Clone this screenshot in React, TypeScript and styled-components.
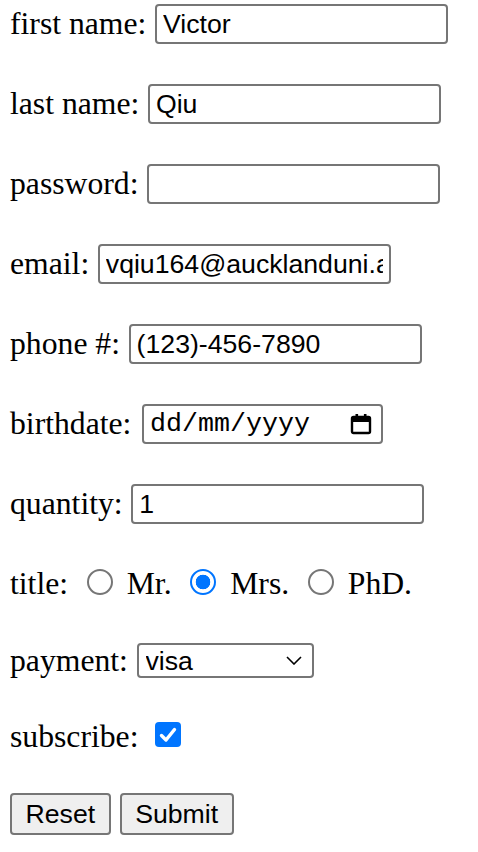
import React from "react";
import styled, { createGlobalStyle } from "styled-components";

const Global = createGlobalStyle`
  html, body { margin: 0; padding: 0; background: #fff; }
  body { font-family: "Liberation Serif", "Times New Roman", serif; color: #000; }
  * { box-sizing: border-box; }
`;

const Form = styled.form`
  display: flex;
  flex-direction: column;
  padding: 4px 0 0 10px;
`;

const Row = styled.div<{ $mt?: number; $h?: number }>`
  display: flex;
  align-items: center;
  gap: 8.6px;
  margin-top: ${(p) => p.$mt ?? 0}px;
  height: ${(p) => p.$h ?? 40}px;
`;

const Label = styled.label`
  font-family: "Liberation Serif", "Times New Roman", serif;
  font-size: 31.7px;
  line-height: 1.107;
  white-space: nowrap;
`;

const TextInput = styled.input<{ $w?: number }>`
  width: ${(p) => p.$w ?? 293}px;
  height: 40px;
  border: 2px solid #767676;
  border-radius: 4px;
  padding: 0 6px;
  font-family: "Liberation Sans", Arial, sans-serif;
  font-size: 26.67px;
  color: #000;
  background: #fff;
  outline: none;
`;

const DateField = styled.div`
  width: 241px;
  height: 40px;
  margin-left: 2px;
  border: 2px solid #767676;
  border-radius: 4px;
  padding: 0 9px 0 6px;
  display: flex;
  align-items: center;
  justify-content: space-between;
  background: #fff;
`;

const DateText = styled.span`
  font-family: "Liberation Mono", "Courier New", monospace;
  font-size: 26.67px;
  color: #000;
  white-space: pre;
`;

const RadioGroup = styled.div`
  display: flex;
  align-items: center;
`;

const Radio = styled.input`
  appearance: none;
  width: 26px;
  height: 26px;
  margin: 0 6px 4px 10px;
  border-radius: 50%;
  border: 2px solid #767676;
  background: #fff;
  &:checked {
    border-color: #0075ff;
    background: radial-gradient(circle, #0075ff 0 7px, #fff 7.6px);
  }
`;

const OptionText = styled.span`
  font-family: "Liberation Serif", "Times New Roman", serif;
  font-size: 31.7px;
  margin-left: 8px;
`;

const SelectBox = styled.div`
  position: relative;
  width: 177px;
  height: 35px;
`;

const Select = styled.select`
  appearance: none;
  width: 100%;
  height: 100%;
  border: 2px solid #767676;
  border-radius: 4px;
  padding: 0 0 0 7px;
  font-family: "Liberation Sans", Arial, sans-serif;
  font-size: 26.67px;
  color: #000;
  background: #fff;
`;

const Chevron = styled.svg`
  position: absolute;
  right: 12px;
  top: 13px;
  pointer-events: none;
`;

const Check = styled.span`
  position: relative;
  display: inline-flex;
  width: 26px;
  height: 25px;
  margin: 0 0 5px 8px;
  border-radius: 4px;
  background: #0075ff;
  align-items: center;
  justify-content: center;
`;

const HiddenCheckbox = styled.input`
  position: absolute;
  inset: 0;
  opacity: 0;
  margin: 0;
`;

const Buttons = styled.div`
  display: flex;
  gap: 9px;
  margin-top: 38px;
  height: 42px;
`;

const Button = styled.button`
  height: 42px;
  padding: 0 13.5px;
  border: 2px solid #767676;
  border-radius: 4px;
  background: #efefef;
  font-family: "Liberation Sans", Arial, sans-serif;
  font-size: 26.67px;
  color: #000;
`;

export default function App() {
  return (
    <>
      <Global />
      <Form onSubmit={(e) => e.preventDefault()}>
        <Row>
          <Label>first name:</Label>
          <TextInput type="text" defaultValue="Victor" />
        </Row>
        <Row $mt={40}>
          <Label>last name:</Label>
          <TextInput type="text" defaultValue="Qiu" />
        </Row>
        <Row $mt={40}>
          <Label>password:</Label>
          <TextInput type="password" defaultValue="" />
        </Row>
        <Row $mt={40}>
          <Label>email:</Label>
          <TextInput type="text" defaultValue="vqiu164@aucklanduni.ac.nz" />
        </Row>
        <Row $mt={40}>
          <Label>phone #:</Label>
          <TextInput type="text" defaultValue="(123)-456-7890" />
        </Row>
        <Row $mt={40}>
          <Label>birthdate:</Label>
          <DateField>
            <DateText>dd/mm/yyyy</DateText>
            <svg width="22" height="22" viewBox="0 0 22 22">
              <rect x="2" y="4" width="18" height="16" rx="1.5" fill="none" stroke="#000" strokeWidth="2.4" />
              <rect x="2" y="4" width="18" height="5" fill="#000" />
              <rect x="5.5" y="1" width="2.6" height="4" fill="#000" />
              <rect x="13.9" y="1" width="2.6" height="4" fill="#000" />
            </svg>
          </DateField>
        </Row>
        <Row $mt={40}>
          <Label>quantity:</Label>
          <TextInput type="text" defaultValue="1" />
        </Row>
        <Row $mt={40}>
          <Label>title:</Label>
          <RadioGroup>
            <Radio type="radio" name="title" />
            <OptionText>Mr.</OptionText>
          </RadioGroup>
          <RadioGroup>
            <Radio type="radio" name="title" defaultChecked />
            <OptionText>Mrs.</OptionText>
          </RadioGroup>
          <RadioGroup>
            <Radio type="radio" name="title" />
            <OptionText>PhD.</OptionText>
          </RadioGroup>
        </Row>
        <Row $mt={39} $h={35}>
          <Label>payment:</Label>
          <SelectBox>
            <Select defaultValue="visa">
              <option value="visa">visa</option>
              <option value="mastercard">mastercard</option>
            </Select>
            <Chevron width="16" height="9" viewBox="0 0 16 9">
              <path d="M1 1 L8 8 L15 1" fill="none" stroke="#000" strokeWidth="1.6" />
            </Chevron>
          </SelectBox>
        </Row>
        <Row $mt={41} $h={36}>
          <Label>subscribe:</Label>
          <Check>
            <HiddenCheckbox type="checkbox" defaultChecked />
            <svg width="18" height="16" viewBox="0 0 18 16">
              <path d="M2.5 8.5 L7 13 L15.5 2.5" fill="none" stroke="#fff" strokeWidth="3.4" strokeLinecap="round" strokeLinejoin="round" />
            </svg>
          </Check>
        </Row>
        <Buttons>
          <Button type="reset">Reset</Button>
          <Button type="submit">Submit</Button>
        </Buttons>
      </Form>
    </>
  );
}
